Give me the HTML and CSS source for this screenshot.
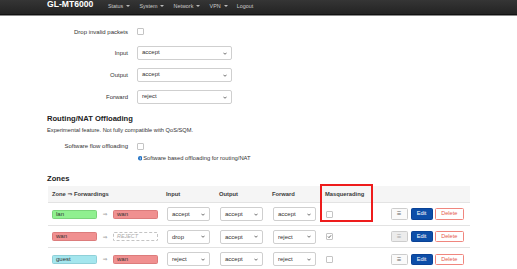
FILE: index.html
```html
<!doctype html>
<html lang="en">
<head>
    <meta charset="UTF-8">
    <title>Firewall - GL-MT6000</title>
    <link rel="stylesheet" href="styles.css">
</head>
<body>
    <div class="navbar">
        <div class="nav-inner">
            <span class="brand">GL-MT6000</span>
            <ul class="nav">
                <li>Status <span class="caret"></span></li>
                <li>System <span class="caret"></span></li>
                <li>Network <span class="caret"></span></li>
                <li>VPN <span class="caret"></span></li>
                <li>Logout</li>
            </ul>
        </div>
    </div>

    <div class="main">
        <div class="row row-cb">
            <label>Drop invalid packets</label>
            <div class="field"><span class="cbox"></span></div>
        </div>
        <div class="row">
            <label>Input</label>
            <div class="field"><div class="select">accept</div></div>
        </div>
        <div class="row">
            <label>Output</label>
            <div class="field"><div class="select">accept</div></div>
        </div>
        <div class="row">
            <label>Forward</label>
            <div class="field"><div class="select">reject</div></div>
        </div>

        <h3>Routing/NAT Offloading</h3>
        <p class="desc">Experimental feature. Not fully compatible with QoS/SQM.</p>
        <div class="row row-sm">
            <label>Software flow offloading</label>
            <div class="field"><span class="cbox"></span></div>
        </div>
        <div class="hint">
            <svg class="info" viewBox="0 0 10 10"><circle cx="5" cy="5" r="5" fill="#1d6fc4"/><rect x="4.2" y="4.2" width="1.6" height="3.8" fill="#fff"/><rect x="4.2" y="2" width="1.6" height="1.5" fill="#fff"/></svg>
            Software based offloading for routing/NAT
        </div>

        <h3 class="zones-title">Zones</h3>
        <div class="table-wrap">
            <table class="zones">
                <tr class="head">
                    <th class="c-zone">Zone ⇒ Forwardings</th>
                    <th class="c-sel">Input</th>
                    <th class="c-sel">Output</th>
                    <th class="c-sel">Forward</th>
                    <th class="c-masq">Masquerading</th>
                    <th class="c-act"></th>
                </tr>
                <tr>
                    <td><span class="zone lan">lan</span><span class="arrow">⇒</span><span class="zone wan">wan</span></td>
                    <td><div class="select sm">accept</div></td>
                    <td><div class="select sm">accept</div></td>
                    <td><div class="select sm">accept</div></td>
                    <td><span class="cbox"></span></td>
                    <td class="c-act"><span class="btn btn-drag">☰</span><span class="btn btn-edit">Edit</span><span class="btn btn-del">Delete</span></td>
                </tr>
                <tr>
                    <td><span class="zone wan">wan</span><span class="arrow">⇒</span><span class="zone reject">REJECT</span></td>
                    <td><div class="select sm">drop</div></td>
                    <td><div class="select sm">accept</div></td>
                    <td><div class="select sm">reject</div></td>
                    <td><span class="cbox checked"></span></td>
                    <td class="c-act"><span class="btn btn-drag off">☰</span><span class="btn btn-edit">Edit</span><span class="btn btn-del">Delete</span></td>
                </tr>
                <tr>
                    <td><span class="zone guest">guest</span><span class="arrow">⇒</span><span class="zone wan">wan</span></td>
                    <td><div class="select sm">reject</div></td>
                    <td><div class="select sm">accept</div></td>
                    <td><div class="select sm">reject</div></td>
                    <td><span class="cbox"></span></td>
                    <td class="c-act"><span class="btn btn-drag">☰</span><span class="btn btn-edit">Edit</span><span class="btn btn-del">Delete</span></td>
                </tr>
            </table>
            <div class="mark"></div>
        </div>
    </div>
</body>
</html>
```

FILE: styles.css
```css
*{padding: 0;margin: 0;box-sizing: border-box}
body{
    font-family: "Liberation Sans", Arial, "DejaVu Sans", sans-serif;
    font-size: 6px;
    color: #333;
    background: #fff;
}
/* top bar */
.navbar{
    height: 15px;
    background: linear-gradient(#353535, #232323);
    border-bottom: 1px solid #111;
    box-shadow: 0 1px 0 #8a8a8a;
}
.nav-inner{
    display: flex;
    align-items: flex-start;
    padding-left: 47px;
}
.brand{
    font-size: 8.6px;
    line-height: 8.6px;
    font-weight: bold;
    color: #fff;
}
.nav{
    display: flex;
    list-style: none;
    margin-left: 10px;
    padding-top: 3px;
}
.nav li{
    padding: 0 4.6px;
    color: #cacaca;
    font-size: 5.4px;
    line-height: 6px;
    display: flex;
    align-items: center;
}
.caret{
    display: inline-block;
    margin-left: 3px;
    border-top: 2px solid #bbb;
    border-left: 2px solid transparent;
    border-right: 2px solid transparent;
}
/* form rows */
.main{
    padding: 6px 0 0 47px;
}
.row{
    display: flex;
    align-items: center;
    height: 22px;
}
.row-cb{height: 21px}
.row-sm{height: 16px}
.row label{
    width: 81px;
    text-align: right;
    color: #333;
}
.field{
    margin-left: 9px;
}
.cbox{
    display: block;
    width: 7px;
    height: 7px;
    border: 1px solid #c4c4c4;
    border-radius: 1px;
    background: #fff;
}
.cbox.checked{
    background: #fff url("data:image/svg+xml,%3Csvg xmlns='http://www.w3.org/2000/svg' viewBox='0 0 10 10'%3E%3Cpath d='M2 5.2l2 2 4-4.4' fill='none' stroke='%23333' stroke-width='1.6'/%3E%3C/svg%3E") center/100% no-repeat;
}
.select{
    width: 95px;
    height: 13.5px;
    line-height: 11.5px;
    padding-left: 4px;
    border: 1px solid #cfcfcf;
    border-radius: 2px;
    background: #fff url("data:image/svg+xml,%3Csvg xmlns='http://www.w3.org/2000/svg' viewBox='0 0 10 6'%3E%3Cpath d='M1 1l4 4 4-4' fill='none' stroke='%23333' stroke-width='1.8'/%3E%3C/svg%3E") right 4px center/4px 3px no-repeat;
    color: #333;
}
.select.sm{
    width: 43px;
    height: 14px;
    line-height: 12px;
}
h3{
    font-size: 7.6px;
    line-height: 9px;
    margin-top: 6px;
    color: #222;
}
.desc{
    line-height: 8px;
    margin-top: 3.4px;
    margin-bottom: 4px;
    font-size: 5.7px;
}
.hint{
    display: flex;
    align-items: center;
    line-height: 8px;
    margin-left: 90.5px;
    font-size: 5.8px;
}
.info{
    width: 4.4px;
    height: 4.4px;
    margin-right: 1.3px;
}
.zones-title{
    margin-top: 11.6px;
}
/* zones table */
.table-wrap{
    position: relative;
    margin-top: 3px;
    width: 422px;
    margin-left: 1px;
}
.zones{
    width: 421px;
    border-collapse: collapse;
    table-layout: fixed;
}
.zones th{
    height: 17px;
    background: #f5f5f5;
    text-align: left;
    font-weight: bold;
    color: #3a3a3a;
    padding-left: 4px;
    font-size: 5.8px;
}
.zones th.c-zone{width: 114px}
.zones th.c-sel{width: 53px}
.zones th.c-masq{width: 52px}
.zones th.c-act{width: 97px}
.zones td{
    height: 22.5px;
    padding-left: 5px;
    border-top: 1px solid #e3e3e3;
}
.zones td:first-child{padding-left: 4px}
.zone{
    display: inline-block;
    vertical-align: middle;
    width: 45px;
    height: 9px;
    line-height: 7px;
    padding-left: 3px;
    border: 1px solid #bbb;
    border-radius: 1.5px;
    color: #333;
}
.zone.lan{background: #90f090;border-color: #7bd47b}
.zone.wan{background: #f09090;border-color: #dc7c7c}
.zone.guest{background: #a4e6ee;border-color: #8fd0d8}
.zone.reject{
    border: 1px dashed #c4c4c4;
    font-style: italic;
    color: #aaa;
    font-size: 5.4px;
}
.arrow{
    display: inline-block;
    vertical-align: middle;
    width: 16px;
    text-align: center;
    color: #999;
    font-family: "DejaVu Sans", sans-serif;
    font-size: 5.5px;
}
.zones td.c-act{
    text-align: right;
    padding-right: 6px;
    font-size: 0;
}
.btn{
    display: inline-block;
    vertical-align: middle;
    height: 11.5px;
    line-height: 9.5px;
    border: 1px solid #ccc;
    border-radius: 1.5px;
    font-size: 5.6px;
    text-align: center;
    margin-left: 3px;
}
.btn-drag{
    width: 17px;
    background: #fafafa;
    color: #666;
    font-family: "DejaVu Sans", sans-serif;
    font-size: 5px;
    margin-right: 1px;
}
.btn-drag.off{background: #ececec;color: #aaa}
.btn-edit{
    width: 22px;
    background: #0d4ea8;
    border-color: #0a4296;
    color: #fff;
    margin-left: 2px;
}
.btn-del{
    width: 29.5px;
    background: #fff;
    border-color: #f0867e;
    color: #e5584f;
    margin-left: 2px;
}
/* annotation box drawn over the table */
.mark{
    position: absolute;
    left: 272px;
    top: -2px;
    width: 53px;
    height: 38px;
    border: 2px solid #ee1c1c;
}
```
